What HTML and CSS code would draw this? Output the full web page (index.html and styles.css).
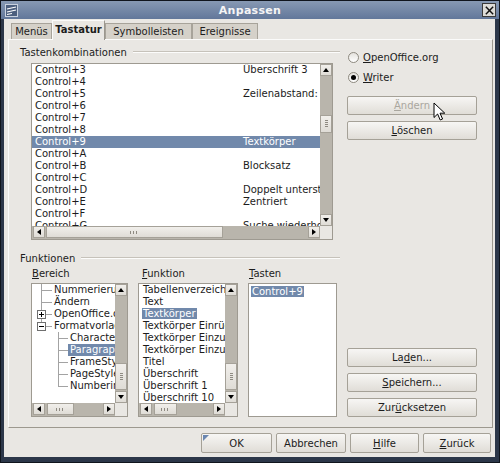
FILE: index.html
```html
<!DOCTYPE html>
<html lang="de">
<head>
    <meta charset="UTF-8">
    <title>Anpassen</title>
    <link rel="stylesheet" href="styles.css">
</head>
<body>
<div class="window">
    <div class="titlebar">
        <svg class="app-icon" viewBox="0 0 13 13">
            <rect x="0.5" y="0.5" width="12" height="12" fill="#4c5f7e" stroke="#c9d2df"/>
            <path d="M2 5 L11 3 M2 8 L11 6 M2 10.5 L7 9.5" stroke="#ffffff" stroke-width="1.2"/>
        </svg>
        <span class="title">Anpassen</span>
        <span class="close">
            <svg viewBox="0 0 12 12"><path d="M2 2 L10 10 M10 2 L2 10" stroke="#111" stroke-width="1.6"/></svg>
        </span>
    </div>

    <div class="client">
        <div class="tabs">
            <div class="tab t-menus">Menüs</div>
            <div class="tab active t-keys">Tastatur</div>
            <div class="tab t-bars">Symbolleisten</div>
            <div class="tab t-events">Ereignisse</div>
        </div>

        <div class="panel">
            <div class="row upper">
                <div class="group">
                    <div class="group-head"><span>Tastenkombinationen</span><i></i></div>
                    <div class="box keylist">
                        <div class="view">
                            <div class="krow"><span>Control+3</span><span>Überschrift 3</span></div>
                            <div class="krow"><span>Control+4</span><span></span></div>
                            <div class="krow"><span>Control+5</span><span>Zeilenabstand: 1,5</span></div>
                            <div class="krow"><span>Control+6</span><span></span></div>
                            <div class="krow"><span>Control+7</span><span></span></div>
                            <div class="krow"><span>Control+8</span><span></span></div>
                            <div class="krow sel"><span>Control+9</span><span>Textkörper</span></div>
                            <div class="krow"><span>Control+A</span><span></span></div>
                            <div class="krow"><span>Control+B</span><span>Blocksatz</span></div>
                            <div class="krow"><span>Control+C</span><span></span></div>
                            <div class="krow"><span>Control+D</span><span>Doppelt unterstreichen</span></div>
                            <div class="krow"><span>Control+E</span><span>Zentriert</span></div>
                            <div class="krow"><span>Control+F</span><span></span></div>
                            <div class="krow"><span>Control+G</span><span>Suche wiederholen</span></div>
                        </div>
                        <div class="vscroll">
                            <div class="sb-btn up"></div>
                            <div class="trough"><div class="thumb"><i class="grip-v"></i></div></div>
                            <div class="sb-btn down"></div>
                        </div>
                        <div class="hscroll">
                            <div class="sb-btn left"></div>
                            <div class="trough"><div class="thumb"><i class="grip-h"></i></div></div>
                            <div class="sb-btn right"></div>
                        </div>
                        <div class="corner"></div>
                    </div>
                </div>

                <div class="side">
                    <label class="radio"><i class="dot"></i><span><u>O</u>penOffice.org</span></label>
                    <label class="radio checked"><i class="dot"></i><span><u>W</u>riter</span></label>
                    <button class="btn disabled b-change"><u>Ä</u>ndern</button>
                    <button class="btn b-delete"><u>L</u>öschen</button>
                </div>
            </div>

            <div class="row lower">
                <div class="group">
                    <div class="group-head"><span>Funktionen</span><i></i></div>
                    <div class="cols">
                        <div class="col c-area">
                            <div class="col-label"><u>B</u>ereich</div>
                            <div class="box tree">
                                <div class="view">
                                    <div class="node"><i class="g tee"></i><span>Nummerierung</span></div>
                                    <div class="node"><i class="g tee"></i><span>Ändern</span></div>
                                    <div class="node"><i class="g tee"><b class="exp plus"></b></i><span>OpenOffice.org</span></div>
                                    <div class="node"><i class="g ell"><b class="exp minus"></b></i><span>Formatvorlagen</span></div>
                                    <div class="node"><i class="g"></i><i class="g2 tee"></i><span>Characterstyles</span></div>
                                    <div class="node sel"><i class="g"></i><i class="g2 tee"></i><span>Paragraphstyles</span></div>
                                    <div class="node"><i class="g"></i><i class="g2 tee"></i><span>FrameStyles</span></div>
                                    <div class="node"><i class="g"></i><i class="g2 tee"></i><span>PageStyles</span></div>
                                    <div class="node"><i class="g"></i><i class="g2 ell"></i><span>NumberingStyles</span></div>
                                </div>
                                <div class="vscroll">
                                    <div class="sb-btn up"></div>
                                    <div class="trough"><div class="thumb"><i class="grip-v"></i></div></div>
                                    <div class="sb-btn down"></div>
                                </div>
                                <div class="hscroll">
                                    <div class="sb-btn left"></div>
                                    <div class="trough"><div class="thumb"><i class="grip-h"></i></div></div>
                                    <div class="sb-btn right"></div>
                                </div>
                                <div class="corner"></div>
                            </div>
                        </div>

                        <div class="col c-func">
                            <div class="col-label"><u>F</u>unktion</div>
                            <div class="box funclist">
                                <div class="view">
                                    <div class="item"><span>Tabellenverzeichnis-Überschrift</span></div>
                                    <div class="item"><span>Text</span></div>
                                    <div class="item sel"><span>Textkörper</span></div>
                                    <div class="item"><span>Textkörper Einrückung</span></div>
                                    <div class="item"><span>Textkörper Einzug</span></div>
                                    <div class="item"><span>Textkörper Einzug negativ</span></div>
                                    <div class="item"><span>Titel</span></div>
                                    <div class="item"><span>Überschrift</span></div>
                                    <div class="item"><span>Überschrift 1</span></div>
                                    <div class="item"><span>Überschrift 10</span></div>
                                </div>
                                <div class="vscroll">
                                    <div class="sb-btn up"></div>
                                    <div class="trough"><div class="thumb"><i class="grip-v"></i></div></div>
                                    <div class="sb-btn down"></div>
                                </div>
                                <div class="hscroll">
                                    <div class="sb-btn left"></div>
                                    <div class="trough"><div class="thumb"><i class="grip-h"></i></div></div>
                                    <div class="sb-btn right"></div>
                                </div>
                                <div class="corner"></div>
                            </div>
                        </div>

                        <div class="col c-keys">
                            <div class="col-label"><u>T</u>asten</div>
                            <div class="box keys">
                                <span class="sel">Control+9</span>
                            </div>
                        </div>
                    </div>
                </div>

                <div class="side side-low">
                    <button class="btn">La<u>d</u>en...</button>
                    <button class="btn"><u>S</u>peichern...</button>
                    <button class="btn">Zur<u>ü</u>cksetzen</button>
                </div>
            </div>
        </div>

        <div class="footer">
            <button class="btn default b-ok">OK</button>
            <button class="btn b-cancel">Abbrechen</button>
            <button class="btn b-help"><u>H</u>ilfe</button>
            <button class="btn b-back"><u>Z</u>urück</button>
        </div>
    </div>

    <svg class="cursor" viewBox="0 0 13 20">
        <path d="M1 1 L1 15.5 L4.6 12 L7.2 18 L9.6 17 L7 11.2 L11.8 11.2 Z" fill="#ffffff" stroke="#000000" stroke-width="1" stroke-linejoin="round"/>
    </svg>
</div>
</body>
</html>
```

FILE: styles.css
```css
* {
    box-sizing: border-box;
}
body {
    margin: 0;
    background: #2a3548;
    font-family: "DejaVu Sans", Verdana, sans-serif;
    font-size: 10px;
    color: #1c1c1c;
}
u {
    text-decoration: underline;
    text-underline-offset: 1px;
}

/* window frame */
.window {
    position: relative;
    width: 500px;
    height: 463px;
    border: 1px solid #10151d;
    background: #2c3749;
    display: flex;
    flex-direction: column;
}
.titlebar {
    flex: none;
    height: 18px;
    display: flex;
    align-items: center;
    padding: 0 3px 0 4px;
    background: linear-gradient(#8799b3, #62779a);
}
.app-icon {
    width: 13px;
    height: 13px;
}
.title {
    flex: 1;
    text-align: center;
    color: #f5f5f5;
    font-size: 11px;
    font-weight: bold;
    letter-spacing: 0.3px;
}
.close {
    width: 14px;
    height: 14px;
    display: flex;
    align-items: center;
    justify-content: center;
    background: #dddcd8;
    border: 1px solid #3a3a3a;
}
.close svg {
    width: 11px;
    height: 11px;
}
.client {
    flex: 1;
    margin: 0 4px 5px 3px;
    padding: 2px 2px 0 4px;
    background: #e9e7e3;
    display: flex;
    flex-direction: column;
}

/* tabs */
.tabs {
    display: flex;
    align-items: flex-end;
    height: 18px;
    margin-left: 3px;
}
.tab {
    height: 16px;
    line-height: 15px;
    text-align: center;
    background: #d5d1c9;
    border: 1px solid #a7a39a;
    border-bottom: none;
}
.tab.active {
    position: relative;
    z-index: 1;
    height: 20px;
    margin-bottom: -1px;
    line-height: 18px;
    font-weight: bold;
    background: #e9e7e3;
    border-color: #fbfbfa #9b978e #9b978e #fbfbfa;
}
.t-menus { width: 41px; }
.t-keys { width: 53px; }
.t-bars { width: 87px; }
.t-events { width: 66px; }

.panel {
    height: 389px;
    border: 1px solid;
    border-color: #fbfbfa #9d998f #9d998f #fbfbfa;
}
.row {
    display: flex;
}
.group {
    width: 333px;
}
.group-head {
    display: flex;
    align-items: center;
    height: 12px;
    padding-left: 11px;
    margin-right: 2px;
}
.group-head i {
    flex: 1;
    margin-left: 6px;
    border-top: 1px solid #c6c2ba;
    border-bottom: 1px solid #fcfcfb;
}
.upper .group-head {
    margin-top: 6px;
}
.lower {
    margin-top: 12px;
    align-items: flex-end;
}

/* list boxes */
.box {
    background: #fff;
    border: 1px solid #9e9a91;
    display: grid;
    grid-template-columns: 1fr 12px;
}
.view {
    overflow: hidden;
    white-space: nowrap;
}
.keylist {
    width: 302px;
    margin: 5px 0 0 22px;
    grid-template-rows: 162px 13px;
}
.krow {
    display: flex;
    height: 12px;
    line-height: 12px;
}
.krow span:first-child {
    flex: none;
    width: 211px;
    padding-left: 3px;
}
.krow.sel {
    background: #7189ab;
    color: #fff;
}

/* scrollbars */
.vscroll,
.hscroll {
    display: flex;
    background: #b9b5ac;
}
.vscroll {
    flex-direction: column;
}
.hscroll {
    padding: 0 0 1px 1px;
}
.trough {
    flex: 1;
    display: flex;
}
.vscroll .trough {
    flex-direction: column;
}
.sb-btn,
.thumb {
    flex: none;
    display: flex;
    align-items: center;
    justify-content: center;
    background: linear-gradient(#f1efeb, #dfdcd6);
    border: 1px solid #a5a198;
}
.sb-btn {
    width: 12px;
    height: 12px;
}
.sb-btn::before {
    content: "";
    border: 3px solid transparent;
}
.up::before { border-bottom: 4px solid #000; border-top: none; }
.down::before { border-top: 4px solid #000; border-bottom: none; }
.left::before { border-right: 4px solid #000; border-left: none; }
.right::before { border-left: 4px solid #000; border-right: none; }
.grip-v {
    width: 3px;
    height: 8px;
    background: repeating-linear-gradient(#8e8a81 0 1px, transparent 1px 2px);
}
.grip-h {
    width: 9px;
    height: 3px;
    background: repeating-linear-gradient(90deg, #8e8a81 0 1px, transparent 1px 3px);
}
.corner {
    background: #e9e7e3;
}
.keylist .vscroll .thumb {
    height: 18px;
    margin-top: 39px;
}
.keylist .hscroll .thumb {
    width: 177px;
    margin-left: 1px;
}

/* right hand buttons */
.side {
    width: 130px;
    margin-left: 5px;
    display: flex;
    flex-direction: column;
}
.upper .side {
    margin-top: 11px;
}
.radio {
    display: flex;
    align-items: center;
    height: 12px;
}
.radio + .radio {
    margin-top: 8px;
}
.dot {
    width: 11px;
    height: 11px;
    margin: 0 4px 0 1px;
    border: 1px solid #8d897f;
    border-radius: 50%;
    background: linear-gradient(#e4e2dd, #ffffff);
    display: flex;
    align-items: center;
    justify-content: center;
}
.checked .dot::after {
    content: "";
    width: 5px;
    height: 5px;
    border-radius: 50%;
    background: #000;
}
.btn {
    position: relative;
    height: 19px;
    padding: 0;
    font: inherit;
    color: #1c1c1c;
    border: 1px solid #a5a197;
    border-radius: 2px;
    background: linear-gradient(#f7f6f4, #e0ddd7);
}
.btn.disabled {
    color: #a9a69e;
}
.b-change {
    margin-top: 13px;
}
.b-delete {
    margin-top: 6px;
}
.side-low {
    gap: 6px;
}

/* lower columns */
.cols {
    display: flex;
    margin: 4px 0 0 22px;
}
.col-label {
    height: 12px;
    line-height: 12px;
    margin-bottom: 3px;
    padding-left: 1px;
}
.c-area { width: 97px; }
.c-func { width: 100px; margin-left: 10px; }
.c-func .col-label { padding-left: 4px; }
.c-keys { width: 89px; margin-left: 10px; }
.tree,
.funclist {
    grid-template-rows: 119px 13px;
}

/* tree */
.node {
    display: flex;
    height: 12px;
    line-height: 12px;
}
.g,
.g2 {
    position: relative;
    flex: none;
    height: 12px;
}
.g { width: 20px; }
.g2 { width: 16px; }
.g.tee {
    background:
        linear-gradient(#a3a3a3, #a3a3a3) 9px 0 / 1px 12px no-repeat,
        linear-gradient(#a3a3a3, #a3a3a3) 9px 6px / 11px 1px no-repeat;
}
.g.ell {
    background:
        linear-gradient(#a3a3a3, #a3a3a3) 9px 0 / 1px 7px no-repeat,
        linear-gradient(#a3a3a3, #a3a3a3) 9px 6px / 11px 1px no-repeat;
}
.g2.tee {
    background:
        linear-gradient(#a3a3a3, #a3a3a3) 6px 0 / 1px 12px no-repeat,
        linear-gradient(#a3a3a3, #a3a3a3) 6px 6px / 10px 1px no-repeat;
}
.g2.ell {
    background:
        linear-gradient(#a3a3a3, #a3a3a3) 6px 0 / 1px 7px no-repeat,
        linear-gradient(#a3a3a3, #a3a3a3) 6px 6px / 10px 1px no-repeat;
}
.exp {
    position: absolute;
    left: 5px;
    top: 2px;
    width: 9px;
    height: 9px;
    border: 1px solid #6f6f6f;
    background: #fff;
}
.exp.plus {
    background:
        linear-gradient(#000, #000) center / 5px 1px no-repeat,
        linear-gradient(#000, #000) center / 1px 5px no-repeat,
        #fff;
}
.exp.minus {
    background: linear-gradient(#000, #000) center / 5px 1px no-repeat, #fff;
}
.node span {
    padding-left: 2px;
}
.node.sel span {
    background: #7189ab;
    color: #fff;
}
.tree .vscroll .thumb,
.funclist .vscroll .thumb {
    height: 27px;
    margin-top: 67px;
}
.tree .hscroll .thumb {
    width: 27px;
    margin-left: 2px;
}
.funclist .hscroll .thumb {
    width: 23px;
    margin-left: 2px;
}

.item {
    height: 12px;
    line-height: 12px;
    padding-left: 3px;
}
.item span {
    padding: 0 1px;
}
.item.sel span {
    background: #7189ab;
    color: #fff;
}

.keys {
    display: block;
    height: 134px;
    padding: 2px 0 0 2px;
}
.keys .sel {
    display: inline-block;
    height: 11px;
    line-height: 11px;
    padding: 0 1px;
    background: #7189ab;
    color: #fff;
}

/* dialog buttons */
.footer {
    display: flex;
    justify-content: flex-end;
    gap: 4px;
    margin-top: 5px;
    padding-right: 2px;
}
.footer .btn {
    height: 20px;
}
.b-ok { width: 71px; }
.b-cancel { width: 70px; }
.b-help { width: 69px; }
.b-back { width: 68px; }
.btn.default::before {
    content: "";
    position: absolute;
    left: 1px;
    top: 1px;
    border-top: 6px solid #6a86b0;
    border-right: 6px solid transparent;
}

.cursor {
    position: absolute;
    left: 432px;
    top: 101px;
    width: 13px;
    height: 20px;
}
```
